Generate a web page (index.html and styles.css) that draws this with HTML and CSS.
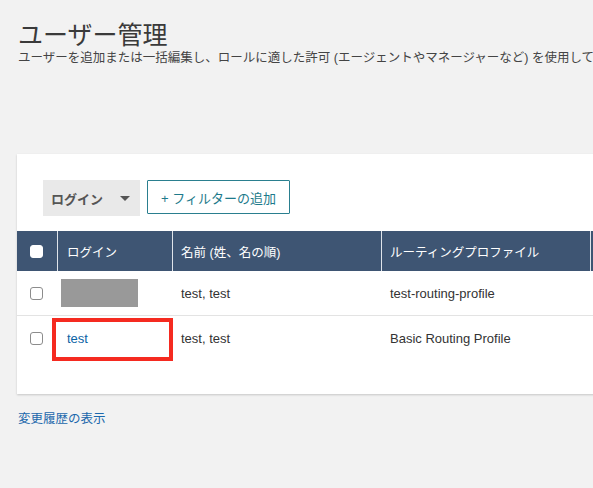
FILE: index.html
```html
<!DOCTYPE html>
<html lang="ja">
<head>
<meta charset="utf-8">
<link rel="stylesheet" href="styles.css">
</head>
<body>
<div class="page">
  <h1 class="title">ユーザー管理</h1>
  <p class="subtitle">ユーザーを追加または一括編集し、ロールに適した許可 (エージェントやマネージャーなど) を使用して</p>

  <div class="card">
    <div class="filters">
      <div class="dropdown"><span>ログイン</span><span class="caret"></span></div>
      <button class="add-filter">+ フィルターの追加</button>
    </div>

    <div class="grid head">
      <div class="cell check"><span class="box box-head"></span></div>
      <div class="cell login">ログイン</div>
      <div class="cell name">名前 (姓、名の順)</div>
      <div class="cell route">ルーティングプロファイル</div>
      <div class="cell extra"></div>
    </div>

    <div class="grid row row-line">
      <div class="cell check"><span class="box"></span></div>
      <div class="cell login"><span class="redact"></span></div>
      <div class="cell name">test, test</div>
      <div class="cell route">test-routing-profile</div>
      <div class="cell extra"></div>
    </div>

    <div class="grid row">
      <div class="cell check"><span class="box"></span></div>
      <div class="cell login marked"><a class="link" href="#">test</a><span class="highlight"></span></div>
      <div class="cell name">test, test</div>
      <div class="cell route">Basic Routing Profile</div>
      <div class="cell extra"></div>
    </div>
  </div>

  <a class="history" href="#">変更履歴の表示</a>
</div>
</body>
</html>
```

FILE: styles.css
```css
html, body {
  margin: 0;
  padding: 0;
  background: #f2f2f2;
}

body {
  font-family: "Liberation Sans", "Noto Sans CJK JP", sans-serif;
  color: #333;
}

.page {
  padding: 18px 0 40px 17px;
  overflow: hidden;
}

.title {
  margin: 0 0 0 1px;
  font-family: "Noto Sans CJK JP", sans-serif;
  font-weight: normal;
  font-size: 25px;
  line-height: 30px;
  color: #3a3a3a;
}

.subtitle {
  margin: 0 0 0 1px;
  font-size: 12.5px;
  line-height: 20px;
  color: #444;
  white-space: nowrap;
}

.card {
  margin-top: 86px;
  width: calc(100% + 240px);
  background: #fff;
  box-shadow: 0 1px 2px rgba(0, 0, 0, 0.18);
  padding-bottom: 34px;
}

.filters {
  display: flex;
  align-items: flex-start;
  gap: 7px;
  padding: 26px 0 0 26px;
  height: 36px;
  margin-bottom: 15px;
}

.dropdown {
  display: flex;
  align-items: center;
  box-sizing: border-box;
  width: 97px;
  height: 36px;
  padding: 0 10px 0 8px;
  background: #e9e9e9;
  font-family: "Noto Sans CJK JP", sans-serif;
  font-weight: bold;
  font-size: 13px;
  color: #555;
}

.caret {
  margin-left: auto;
  width: 0;
  height: 0;
  border-left: 5px solid transparent;
  border-right: 5px solid transparent;
  border-top: 5px solid #555;
}

.add-filter {
  box-sizing: border-box;
  width: 143px;
  height: 34px;
  padding: 0;
  background: #fff;
  border: 1px solid #2a7f8f;
  border-radius: 1px;
  font-family: "Liberation Sans", "Noto Sans CJK JP", sans-serif;
  font-size: 13px;
  color: #1d7a8b;
}

.grid {
  display: grid;
  grid-template-columns: 41px 115px 209px 209px 1fr;
  align-items: stretch;
}

.cell {
  display: flex;
  align-items: center;
  box-sizing: border-box;
  font-size: 13px;
}

.head {
  height: 40px;
  background: #3e5573;
}

.head .cell {
  color: #fff;
  font-size: 12.5px;
  border-right: 1px solid #dfe4ea;
}

.head .cell.extra {
  border-right: none;
}

.row {
  height: 44px;
}

.row-line {
  border-bottom: 1px solid #e3e3e3;
}

.check {
  padding-left: 13px;
}

.login {
  padding-left: 9px;
}

.name,
.route {
  padding-left: 8px;
}

.box {
  display: block;
  box-sizing: border-box;
  width: 13px;
  height: 13px;
  border: 1px solid #8c8c8c;
  border-radius: 3px;
  background: #fff;
}

.box-head {
  border-color: #fff;
}

.redact {
  display: block;
  width: 77px;
  height: 28px;
  margin-left: -6px;
  background: #999;
}

.marked {
  position: relative;
}

.link {
  color: #0b63a5;
  text-decoration: none;
}

.highlight {
  position: absolute;
  left: -6px;
  top: 2px;
  width: 121px;
  height: 43px;
  box-sizing: border-box;
  border: 4px solid #f52a20;
}

.history {
  display: block;
  margin-top: 15px;
  margin-left: 1px;
  font-size: 12.5px;
  line-height: 20px;
  color: #1b68ac;
  text-decoration: none;
}
```
